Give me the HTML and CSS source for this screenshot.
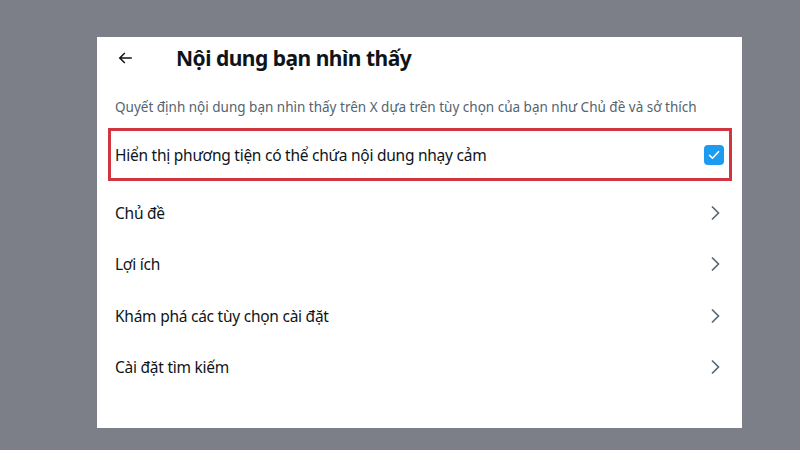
FILE: index.html
```html
<!DOCTYPE html>
<html lang="vi">
<head>
<meta charset="utf-8">
<link rel="stylesheet" href="styles.css">
</head>
<body>
<div class="panel">
  <div class="header">
    <span class="back">
      <svg viewBox="0 0 24 24" width="18" height="18"><path d="M7.414 13l5.043 5.04-1.414 1.42L3.586 12l7.457-7.46 1.414 1.42L7.414 11H21v2H7.414z" fill="#0f1419"/></svg>
    </span>
    <h1 class="title">Nội dung bạn nhìn thấy</h1>
  </div>
  <p class="desc">Quyết định nội dung bạn nhìn thấy trên X dựa trên tùy chọn của bạn như Chủ đề và sở thích</p>
  <div class="list">
    <div class="row row-hl">
      <span class="label">Hiển thị phương tiện có thể chứa nội dung nhạy cảm</span>
      <span class="check">
        <svg viewBox="0 0 20 20" width="20" height="20"><rect width="20" height="20" rx="4" fill="#1d9bf0"/><path d="M5.5 10.3l3 3 6-6.6" fill="none" stroke="#fff" stroke-width="1.6" stroke-linecap="round" stroke-linejoin="round"/></svg>
      </span>
    </div>
    <div class="row"><span class="label">Chủ đề</span><span class="chev"><svg viewBox="0 0 10 16" width="10" height="16"><path d="M2 1.5l6.5 6.5L2 14.5" fill="none" stroke="#536471" stroke-width="1.6"/></svg></span></div>
    <div class="row"><span class="label">Lợi ích</span><span class="chev"><svg viewBox="0 0 10 16" width="10" height="16"><path d="M2 1.5l6.5 6.5L2 14.5" fill="none" stroke="#536471" stroke-width="1.6"/></svg></span></div>
    <div class="row"><span class="label">Khám phá các tùy chọn cài đặt</span><span class="chev"><svg viewBox="0 0 10 16" width="10" height="16"><path d="M2 1.5l6.5 6.5L2 14.5" fill="none" stroke="#536471" stroke-width="1.6"/></svg></span></div>
    <div class="row"><span class="label">Cài đặt tìm kiếm</span><span class="chev"><svg viewBox="0 0 10 16" width="10" height="16"><path d="M2 1.5l6.5 6.5L2 14.5" fill="none" stroke="#536471" stroke-width="1.6"/></svg></span></div>
  </div>
</div>
</body>
</html>
```
FILE: styles.css
```css
html, body {
  margin: 0;
  padding: 0;
}
body {
  background: #7c7f87;
  width: 800px;
  height: 450px;
  overflow: hidden;
  padding: 37px 0 0 97px;
  box-sizing: border-box;
  font-family: "Noto Sans", "Open Sans", sans-serif;
  color: #0f1419;
}
.panel {
  width: 645px;
  height: 391px;
  background: #fff;
  box-sizing: border-box;
}
.header {
  display: flex;
  align-items: center;
  height: 42px;
}
.back {
  width: 18px;
  height: 18px;
  margin-left: 19px;
  display: flex;
}
.title {
  margin: 0 0 0 42px;
  font-size: 21px;
  letter-spacing: -0.5px;
  font-weight: 700;
  line-height: 42px;
}
.desc {
  margin: 19px 0 0 18px;
  font-size: 13.5px;
  line-height: 18px;
  color: #536471;
}
.list {
  margin-top: 12px;
  display: flex;
  flex-direction: column;
}
.row {
  display: flex;
  align-items: center;
  justify-content: space-between;
  height: 51.5px;
  padding: 0 22px 0 18px;
  font-size: 15.5px;
  letter-spacing: -0.25px;
  box-sizing: border-box;
}
.row-hl {
  height: 53px;
  margin: 0 10px 6px 11px;
  padding: 1px 5px 0 4px;
  border: 3px solid #d1353f;
}
.check, .chev {
  display: flex;
}
```
